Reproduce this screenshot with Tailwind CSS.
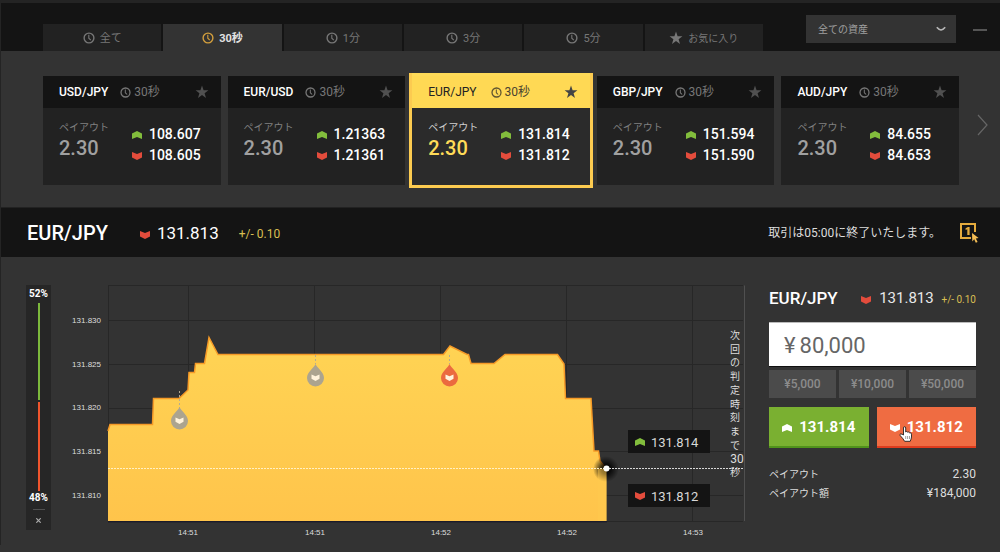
<!DOCTYPE html>
<html lang="ja">
<head>
<meta charset="utf-8">
<meta name="viewport" content="width=device-width, initial-scale=1">
<title>EUR/JPY 30秒</title>
<script src="https://cdn.jsdelivr.net/npm/@tailwindcss/browser@4"></script>
</head>
<body class="min-h-screen bg-[#333333] font-['Roboto','Noto_Sans_CJK_JP',sans-serif] text-white">

<svg class="hidden" aria-hidden="true">
  <symbol id="clock" viewBox="0 0 12 12"><circle cx="6" cy="6" r="4.9" fill="none" stroke="currentColor" stroke-width="1.4"/><path d="M5.8 2.8V6.2L7.8 8.2" fill="none" stroke="currentColor" stroke-width="1.1"/></symbol>
  <symbol id="star" viewBox="0 0 14 14"><path d="M7 .6 8.6 5.2 13.4 5.3 9.6 8.2 11 12.9 7 10.1 3 12.9 4.4 8.2 .6 5.3 5.4 5.2Z" fill="currentColor"/></symbol>
  <symbol id="up" viewBox="0 0 10 8"><path d="M0 2.6 5 0 10 2.6V8L5 5.9 0 8Z" fill="currentColor"/></symbol>
  <symbol id="down" viewBox="0 0 10 8"><path d="M0 0 5 2.1 10 0V5.4L5 8 0 5.4Z" fill="currentColor"/></symbol>
</svg>

<div class="border-l border-[#242424]">
<header class="flex items-end border-t-3 border-[#242424] bg-[#141414] pl-[42px] pr-[13px]">
  <nav class="grid flex-1 grid-cols-6 gap-[2px] text-[11px] leading-4 text-[#777777]" aria-label="取引時間">
    <button class="flex h-[27px] items-center justify-center gap-[5px] bg-[#222222]"><svg class="size-3"><use href="#clock"/></svg><span class="pt-[2px]">全て</span></button>
    <button class="flex h-[27px] items-center justify-center gap-[5px] bg-[#333333] font-bold text-[#e2e2e2]"><svg class="size-3 text-[#d39f3d]"><use href="#clock"/></svg><span class="pt-[2px]">30秒</span></button>
    <button class="flex h-[27px] items-center justify-center gap-[5px] bg-[#222222]"><svg class="size-3"><use href="#clock"/></svg><span class="pt-[2px]">1分</span></button>
    <button class="flex h-[27px] items-center justify-center gap-[5px] bg-[#222222]"><svg class="size-3"><use href="#clock"/></svg><span class="pt-[2px]">3分</span></button>
    <button class="flex h-[27px] items-center justify-center gap-[5px] bg-[#222222]"><svg class="size-3"><use href="#clock"/></svg><span class="pt-[2px]">5分</span></button>
    <button class="flex h-[27px] items-center justify-center gap-[5px] bg-[#222222]"><svg class="size-[14px]"><use href="#star"/></svg><span class="pt-[2px] text-[10px]">お気に入り</span></button>
  </nav>
  <div class="mb-2 ml-[43px] mt-3 grid w-[150px] items-center">
    <select aria-label="資産" class="col-start-1 row-start-1 h-7 w-full appearance-none bg-[#333333] pl-3 text-[10px] text-[#a0a0a0]"><option>全ての資産</option></select>
    <svg class="pointer-events-none col-start-1 row-start-1 mr-[10px] h-[6px] w-[10px] justify-self-end" viewBox="0 0 10 6" fill="none" stroke="#b8b8b8" stroke-width="1.6"><path d="M.8 1.2Q3 3.8 5 4 7 3.8 9.2 1.2"/></svg>
  </div>
  <button class="mb-[20px] ml-[17px] h-[2px] w-[14px] bg-[#555555]" aria-label="最小化"></button>
</header>

<section class="flex items-stretch border-b border-[#222222] pb-[22px] pl-[42px] pt-[25px]">
  <div class="grid flex-1 grid-cols-5 gap-[7px]">
    <article class="h-[109px] bg-[#222222]">
      <div class="flex h-8 items-center bg-[#141414] pl-4 pr-3 text-xs"><h2 class="font-medium">USD/JPY</h2><svg class="ml-3 size-[11px] text-[#777777]"><use href="#clock"/></svg><span class="ml-[3px] leading-4 text-[#777777]">30秒</span><button class="ml-auto text-[#505050]" aria-label="お気に入り"><svg class="size-[14px]"><use href="#star"/></svg></button></div>
      <div class="flex justify-between pl-4 pr-5 pt-3">
        <div><p class="text-[10px] leading-4 text-[#808080]">ペイアウト</p><p class="text-xl font-medium leading-6 text-[#a0a0a0]">2.30</p></div>
        <div class="pt-1 text-[14px] font-medium leading-[21px]"><p class="flex items-center gap-[7px]"><svg class="h-2 w-[10px] text-[#82bd3c]"><use href="#up"/></svg>108.607</p><p class="flex items-center gap-[7px]"><svg class="h-2 w-[10px] text-[#e34c3c]"><use href="#down"/></svg>108.605</p></div>
      </div>
    </article>
    <article class="h-[109px] bg-[#222222]">
      <div class="flex h-8 items-center bg-[#141414] pl-4 pr-3 text-xs"><h2 class="font-medium">EUR/USD</h2><svg class="ml-3 size-[11px] text-[#777777]"><use href="#clock"/></svg><span class="ml-[3px] leading-4 text-[#777777]">30秒</span><button class="ml-auto text-[#505050]" aria-label="お気に入り"><svg class="size-[14px]"><use href="#star"/></svg></button></div>
      <div class="flex justify-between pl-4 pr-5 pt-3">
        <div><p class="text-[10px] leading-4 text-[#808080]">ペイアウト</p><p class="text-xl font-medium leading-6 text-[#a0a0a0]">2.30</p></div>
        <div class="pt-1 text-[14px] font-medium leading-[21px]"><p class="flex items-center gap-[7px]"><svg class="h-2 w-[10px] text-[#82bd3c]"><use href="#up"/></svg>1.21363</p><p class="flex items-center gap-[7px]"><svg class="h-2 w-[10px] text-[#e34c3c]"><use href="#down"/></svg>1.21361</p></div>
      </div>
    </article>
    <article class="h-[109px] bg-[#2b2b2b] ring-3 ring-[#fccb50]">
      <div class="flex h-8 items-center bg-[#ffd954] pl-4 pr-3 text-xs text-[#222222] shadow-[0_-3px_0_#ffdb58]"><h2>EUR/JPY</h2><svg class="ml-[14px] size-[11px] text-[#5f5430]"><use href="#clock"/></svg><span class="ml-[3px] leading-4 text-[#4a4330]">30秒</span><button class="ml-auto text-[#444444]" aria-label="お気に入り"><svg class="size-[14px]"><use href="#star"/></svg></button></div>
      <div class="flex justify-between pl-4 pr-5 pt-3">
        <div><p class="text-[10px] leading-4 text-[#d0d0d0]">ペイアウト</p><p class="text-xl font-medium leading-6 text-[#ffdb58]">2.30</p></div>
        <div class="pt-1 text-[14px] font-medium leading-[21px]"><p class="flex items-center gap-[7px]"><svg class="h-2 w-[10px] text-[#82bd3c]"><use href="#up"/></svg>131.814</p><p class="flex items-center gap-[7px]"><svg class="h-2 w-[10px] text-[#e34c3c]"><use href="#down"/></svg>131.812</p></div>
      </div>
    </article>
    <article class="h-[109px] bg-[#222222]">
      <div class="flex h-8 items-center bg-[#141414] pl-4 pr-3 text-xs"><h2 class="font-medium">GBP/JPY</h2><svg class="ml-3 size-[11px] text-[#777777]"><use href="#clock"/></svg><span class="ml-[3px] leading-4 text-[#777777]">30秒</span><button class="ml-auto text-[#505050]" aria-label="お気に入り"><svg class="size-[14px]"><use href="#star"/></svg></button></div>
      <div class="flex justify-between pl-4 pr-5 pt-3">
        <div><p class="text-[10px] leading-4 text-[#808080]">ペイアウト</p><p class="text-xl font-medium leading-6 text-[#a0a0a0]">2.30</p></div>
        <div class="pt-1 text-[14px] font-medium leading-[21px]"><p class="flex items-center gap-[7px]"><svg class="h-2 w-[10px] text-[#82bd3c]"><use href="#up"/></svg>151.594</p><p class="flex items-center gap-[7px]"><svg class="h-2 w-[10px] text-[#e34c3c]"><use href="#down"/></svg>151.590</p></div>
      </div>
    </article>
    <article class="h-[109px] bg-[#222222]">
      <div class="flex h-8 items-center bg-[#141414] pl-4 pr-3 text-xs"><h2 class="font-medium">AUD/JPY</h2><svg class="ml-3 size-[11px] text-[#777777]"><use href="#clock"/></svg><span class="ml-[3px] leading-4 text-[#777777]">30秒</span><button class="ml-auto text-[#505050]" aria-label="お気に入り"><svg class="size-[14px]"><use href="#star"/></svg></button></div>
      <div class="flex justify-between pl-4 pr-7 pt-3">
        <div><p class="text-[10px] leading-4 text-[#808080]">ペイアウト</p><p class="text-xl font-medium leading-6 text-[#a0a0a0]">2.30</p></div>
        <div class="pt-1 text-[14px] font-medium leading-[21px]"><p class="flex items-center gap-[7px]"><svg class="h-2 w-[10px] text-[#82bd3c]"><use href="#up"/></svg>84.655</p><p class="flex items-center gap-[7px]"><svg class="h-2 w-[10px] text-[#e34c3c]"><use href="#down"/></svg>84.653</p></div>
      </div>
    </article>
  </div>
  <button class="flex w-[41px] justify-end pr-[12px] pt-[38px]" aria-label="次へ"><svg class="h-[22px] w-[11px]" viewBox="0 0 11 22" fill="none" stroke="#666666" stroke-width="1.2"><path d="M1 1 10 11 1 21"/></svg></button>
</section>

<section class="flex h-[49px] items-center bg-[#141414] pl-[26px] pr-[21px]">
  <h1 class="text-xl font-medium">EUR/JPY</h1>
  <svg class="ml-8 mt-1 h-2 w-[10px] text-[#e34c3c]"><use href="#down"/></svg>
  <span class="ml-[7px] text-[17px] leading-6">131.813</span>
  <span class="ml-5 pt-[3px] text-xs text-[#d9bf52]">+/- 0.10</span>
  <p class="ml-auto text-xs text-[#dddddd]">取引は05:00に終了いたします。</p>
  <button class="ml-[19px]" aria-label="ワンクリック取引"><svg class="h-5 w-[19px]" viewBox="0 0 19 20"><path d="M11 15H1V1H15V9" fill="none" stroke="#e5ab3d" stroke-width="2"/><path d="M5.6 5.2 8 4H9.6V12H7.3V6.3L5.6 7Z" fill="#e5ab3d"/><path d="M12 10 18.6 15 15.8 15.5 17.6 19 15.8 19.8 14.2 16.3 12.3 18.4Z" fill="#f4bd55"/></svg></button>
</section>

<main class="flex items-start pl-[25px] pr-6">
  <aside class="mt-7 flex h-[245px] w-[25px] flex-col items-center bg-[#262626] pt-[3px] text-[10px] font-bold leading-3" aria-label="売買比率">
    <span>52%</span>
    <span class="mt-[3px] w-[2px] flex-[52] bg-[#7cb83c]"></span>
    <span class="mt-[2px] w-[2px] flex-[48] bg-[#f0552d]"></span>
    <span class="mt-[1px]">48%</span>
    <span class="mt-[5px] h-px w-3 bg-[#505050]"></span>
    <button class="flex h-5 w-full items-center justify-center" aria-label="閉じる"><svg class="size-[5px]" viewBox="0 0 5 5" stroke="#aaaaaa" stroke-width="1.2"><path d="M.3.3 4.7 4.7M4.7.3.3 4.7"/></svg></button>
  </aside>

  <svg class="ml-[9px] mt-[23px] min-w-0 flex-1" viewBox="60 280 690 265" role="img" aria-label="EUR/JPY チャート">
    <defs>
      <linearGradient id="gold" x1="0" y1="0" x2="0" y2="1"><stop offset="0" stop-color="#ffd454"/><stop offset="1" stop-color="#ffc44b"/></linearGradient>
      <radialGradient id="glow"><stop offset="0" stop-color="#000"/><stop offset=".4" stop-color="#000" stop-opacity=".75"/><stop offset="1" stop-color="#000" stop-opacity="0"/></radialGradient>
      <g id="pin"><path d="M0-13C1.500-9 8.500-5 8.500 1A8.500 8.500 0 0 1-8.500 1C-8.500-5-1.500-9 0-13Z" fill="currentColor"/><path d="M-4-2.500 0-.8 4-2.500V1.800L0 4-4 1.800Z" fill="#fff3dc"/></g>
    </defs>
    <path d="M108.500 285.500H743M108 320.500H743M108 364.500H743M108 408.500H743M108 451.500H743M108 495.500H743M108 521.500H743M108.500 285V521M188.500 285V521M314.500 285V521M440.500 285V521M566.500 285V521M692.500 285V521" stroke="#272727" fill="none"/>
    <path d="M744.500 285.500V521" stroke="#505050"/>
    <path d="M108 521V431L110 424.500H152.500L153.500 398.500H179L188 390 189 372.500H194.500L195.500 363.500H204.500L209 337.500 218 354.500H443.500L450 346 467 354.500H468.500L471 363.500H494L505 354.500H557.500L564 364 565.500 398.500H591L594 451H598.500L600 461 606.500 469V521Z" fill="url(#gold)"/>
    <path d="M108 431 110 424.500H152.500L153.500 398.500H179L188 390 189 372.500H194.500L195.500 363.500H204.500L209 337.500 218 354.500H443.500L450 346 467 354.500H468.500L471 363.500H494L505 354.500H557.500L564 364 565.500 398.500H591L594 451H598.500L600 461 606.500 469" fill="none" stroke="#f69a27" stroke-width="1.5"/>
    <path d="M108 521.800H607" stroke="#17172b"/>
    <circle cx="606" cy="469" r="13" fill="url(#glow)"/>
    <path d="M606.500 469V521H598V469Z" fill="#ffc94e" opacity=".5"/>
    <path d="M108 468.500H606" stroke="#fff0c4" stroke-dasharray="2 1"/>
    <path d="M606 468.500H744" stroke="#d8d8d8" stroke-dasharray="2 1"/>
    <circle cx="606.500" cy="468.500" r="3" fill="#fff"/>
    <g stroke="#b4ab92" stroke-dasharray="2 2"><path d="M179.500 391V408M315.500 355V364M449.500 355V364"/></g>
    <use href="#pin" x="179.500" y="420" class="text-[#aca48f]"/>
    <use href="#pin" x="315.500" y="377" class="text-[#aca48f]"/>
    <use href="#pin" x="449.500" y="377" class="text-[#eb6a3f]"/>
    <g class="fill-[#dddddd] font-['Liberation_Sans',sans-serif] text-[8px]" text-anchor="end">
      <text x="101" y="323">131.830</text><text x="101" y="367">131.825</text><text x="101" y="410">131.820</text><text x="101" y="454">131.815</text><text x="101" y="498">131.810</text>
    </g>
    <g class="fill-[#dddddd] font-['Liberation_Sans',sans-serif] text-[8px]" text-anchor="middle">
      <text x="188" y="535">14:51</text><text x="315" y="535">14:51</text><text x="441" y="535">14:52</text><text x="567" y="535">14:52</text><text x="693" y="535">14:53</text>
    </g>
    <path d="M628 430H710V453H628ZM628 484H710V507H628Z" fill="#141414"/>
    <use href="#up" x="635" y="438" width="10" height="8" class="text-[#82bd3c]"/>
    <use href="#down" x="635" y="492" width="10" height="8" class="text-[#e34c3c]"/>
    <g class="fill-[#d8d8d8] text-[13px]"><text x="651" y="447">131.814</text><text x="651" y="501">131.812</text></g>
    <text class="fill-[#dddddd] text-[10px]" text-anchor="middle"><tspan x="735" y="339">次</tspan><tspan x="735" y="353">回</tspan><tspan x="735" y="366">の</tspan><tspan x="735" y="380">判</tspan><tspan x="735" y="394">定</tspan><tspan x="735" y="408">時</tspan><tspan x="735" y="421">刻</tspan><tspan x="735" y="435">ま</tspan><tspan x="735" y="449">で</tspan><tspan x="737" y="463" class="text-xs">30</tspan><tspan x="735" y="476">秒</tspan></text>
  </svg>

  <form class="ml-[19px] w-[207px] pt-[27px]">
    <div class="flex items-center justify-between leading-6"><h2 class="text-[17px] font-medium">EUR/JPY</h2><svg class="ml-4 mt-1 h-2 w-[10px] text-[#e34c3c]"><use href="#down"/></svg><span class="text-[15px] text-[#e8e8e8]">131.813</span><span class="pt-1 text-[10px] text-[#d9bf52]">+/- 0.10</span></div>
    <label class="mt-[10px] flex h-[44px] items-center border-t border-[#bbbbbb] bg-white pl-[15px] pt-[2px] text-[22px] text-[#666666] shadow-[0_1px_0_#111111]">¥<input class="ml-1 w-full min-w-0 outline-none" value="80,000" aria-label="金額"></label>
    <div class="mt-1 grid grid-cols-3 gap-[3px] text-xs font-medium text-[#8c8c8c]">
      <button type="button" class="h-7 bg-[#4b4b4b]">¥5,000</button><button type="button" class="h-7 bg-[#4b4b4b]">¥10,000</button><button type="button" class="h-7 bg-[#4b4b4b]">¥50,000</button>
    </div>
    <div class="mt-[9px] grid grid-cols-2 gap-2 text-[15px] font-bold">
      <button type="button" class="flex h-[41px] items-center justify-center gap-[7px] border-b-2 border-[#50921b] bg-[#7ab031] pt-[2px]"><svg class="h-2 w-[10px]"><use href="#up"/></svg>131.814</button>
      <button type="button" class="relative flex h-[41px] items-center justify-center gap-[7px] border-b-2 border-[#de3c1e] bg-[#ef6c42] pt-[2px]"><svg class="h-2 w-[10px]"><use href="#down"/></svg>131.812
        <svg class="absolute left-[22px] top-[19px] h-[16px] w-[14px]" viewBox="0 0 14 16"><path d="M4.500 9V2Q4.500.7 5.600.7T6.700 2V6Q7.500 5 8.500 6.100 9.500 5.500 10.300 6.700 12.300 6.200 12.500 8.200V11Q12.300 13 11.200 15.300H5.600Q4.500 13 1.200 9.600.5 8.200 1.700 7.900 3 7.900 4.500 9Z" fill="#fff" stroke="#222" stroke-width=".9"/><path d="M6.700 10V13M8.600 10V13M10.500 10V13" stroke="#777" stroke-width=".7"/></svg>
      </button>
    </div>
    <dl class="mt-[17px] grid grid-cols-2 text-xs leading-[19px] text-[#dddddd]">
      <dt class="text-[10px] leading-[19px]">ペイアウト</dt><dd class="text-right">2.30</dd>
      <dt class="text-[10px] leading-[19px]">ペイアウト額</dt><dd class="text-right">¥184,000</dd>
    </dl>
  </form>
</main>
</div>
</body>
</html>
